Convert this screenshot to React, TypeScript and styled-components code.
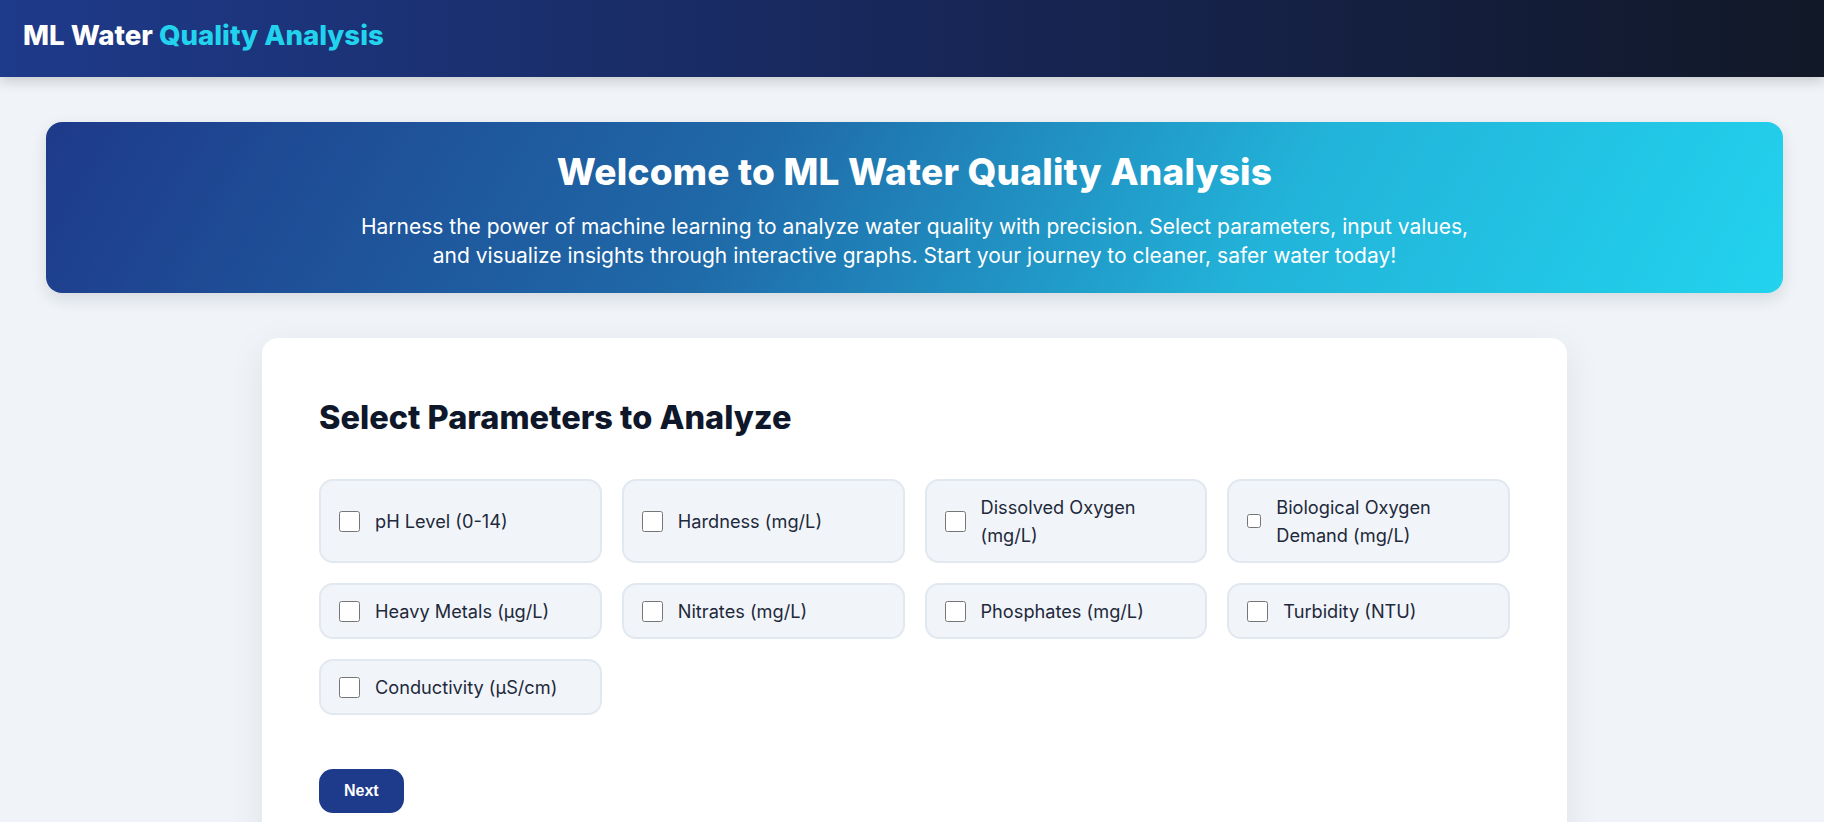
import React from "react";
import styled, { createGlobalStyle } from "styled-components";

const GlobalStyle = createGlobalStyle`
  html { scrollbar-width: none; }
  html::-webkit-scrollbar { display: none; }
  body {
    margin: 0;
    background: #f0f4f8;
    font-family: Inter, "Open Sans", sans-serif;
    color: #1e293b;
  }
  * { box-sizing: border-box; }
`;

const Header = styled.header`
  height: 77px;
  display: flex;
  align-items: center;
  padding: 0 23px 8px;
  background: linear-gradient(90deg, #1e3a8a 0%, #172554 55%, #111827 100%);
  box-shadow: 0 4px 12px rgba(0, 0, 0, 0.18);
  position: relative;
  z-index: 1;
`;

const Brand = styled.h1`
  margin: 0;
  font-size: 27.6px;
  font-weight: 800;
  color: #ffffff;
`;

const Accent = styled.span`
  color: #22d3ee;
`;

const Main = styled.main`
  padding: 45px 41px 60px 46px;
  display: flex;
  flex-direction: column;
  gap: 45px;
`;

const Hero = styled.section`
  height: 171px;
  border-radius: 16px;
  background: linear-gradient(120deg, #1e3a8a 0%, #1f6aa8 40%, #22b3d9 70%, #22d3ee 100%);
  box-shadow: 0 6px 16px rgba(15, 23, 42, 0.12);
  display: flex;
  flex-direction: column;
  align-items: center;
  padding-top: 26px;
  color: #ffffff;
  text-align: center;
`;

const HeroTitle = styled.h2`
  margin: 0;
  font-size: 37px;
  font-weight: 800;
  line-height: 48px;
  letter-spacing: 0.2px;
`;

const HeroText = styled.p`
  margin: 16px 0 0;
  font-size: 21px;
  line-height: 29px;
  font-weight: 400;
`;

const Card = styled.section`
  width: 1305px;
  margin: 0 auto;
  background: #ffffff;
  border-radius: 16px;
  box-shadow: 0 10px 36px rgba(15, 23, 42, 0.08);
  padding: 58px 57px 60px;
`;

const CardTitle = styled.h3`
  margin: 0 0 39px;
  font-size: 32.5px;
  line-height: 44px;
  font-weight: 800;
  color: #0f172a;
`;

const Grid = styled.div`
  display: grid;
  grid-template-columns: repeat(4, 1fr);
  gap: 20px;
`;

const Option = styled.label`
  display: flex;
  align-items: center;
  gap: 15px;
  padding: 12px 18px;
  background: #f1f5f9;
  border: 2px solid #e2e8f0;
  border-radius: 14px;
  font-size: 18.2px;
  line-height: 28px;
  color: #1e293b;
  cursor: pointer;
`;

const Check = styled.input<{ $small?: boolean }>`
  flex: none;
  margin: 0;
  width: ${(p) => (p.$small ? "14px" : "21px")};
  height: ${(p) => (p.$small ? "14px" : "21px")};
`;

const Label = styled.span<{ $tight?: boolean }>`
  max-width: ${(p) => (p.$tight ? "180px" : "none")};
`;

const Actions = styled.div`
  margin-top: 54px;
`;

const NextButton = styled.button`
  height: 44px;
  padding: 0 25px;
  border: none;
  border-radius: 14px;
  background: #1e3a8a;
  color: #ffffff;
  font-family: "Liberation Sans", Arial, sans-serif;
  font-weight: 700;
  font-size: 16px;
  cursor: pointer;
`;

const params: { label: string; tight?: boolean; small?: boolean }[] = [
  { label: "pH Level (0-14)" },
  { label: "Hardness (mg/L)" },
  { label: "Dissolved Oxygen (mg/L)", tight: true },
  { label: "Biological Oxygen Demand (mg/L)", tight: true, small: true },
  { label: "Heavy Metals (µg/L)" },
  { label: "Nitrates (mg/L)" },
  { label: "Phosphates (mg/L)" },
  { label: "Turbidity (NTU)" },
  { label: "Conductivity (µS/cm)" },
];

export default function App() {
  return (
    <>
      <GlobalStyle />
      <Header>
        <Brand>
          ML Water <Accent>Quality Analysis</Accent>
        </Brand>
      </Header>
      <Main>
        <Hero>
          <HeroTitle>Welcome to ML Water Quality Analysis</HeroTitle>
          <HeroText>
            Harness the power of machine learning to analyze water quality with precision. Select parameters, input values,
            <br />
            and visualize insights through interactive graphs. Start your journey to cleaner, safer water today!
          </HeroText>
        </Hero>
        <Card>
          <CardTitle>Select Parameters to Analyze</CardTitle>
          <Grid>
            {params.map((p) => (
              <Option key={p.label}>
                <Check type="checkbox" $small={p.small} />
                <Label $tight={p.tight}>{p.label}</Label>
              </Option>
            ))}
          </Grid>
          <Actions>
            <NextButton type="button">Next</NextButton>
          </Actions>
        </Card>
      </Main>
    </>
  );
}
